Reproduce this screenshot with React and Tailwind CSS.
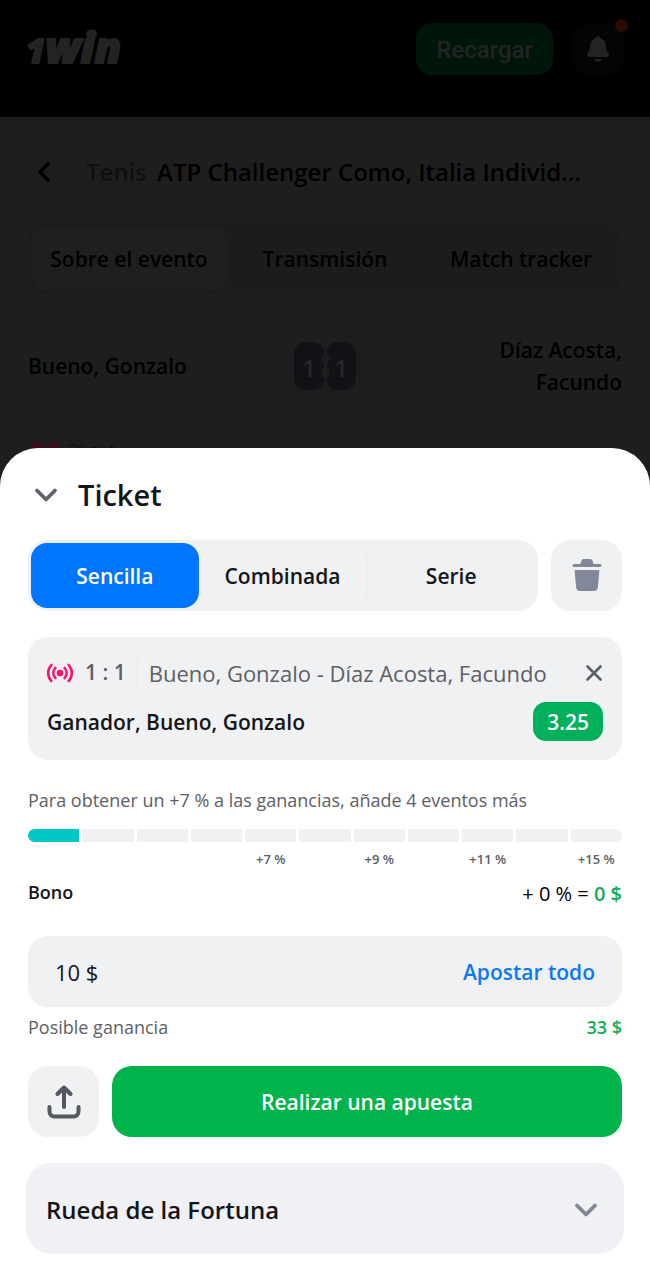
import { ChevronDown, ChevronLeft, X } from "lucide-react";

const EVENT_TABS = ["Sobre el evento", "Transmisión", "Match tracker"];
const SET_COLUMNS = ["1", "2", "3", "P", "S"];
const BONUS_STEPS = ["", "", "", "", "+7 %", "", "+9 %", "", "+11 %", "", "+15 %"];

const Logo = () => (
  <svg viewBox="0 0 98 52" className="h-[52px] w-[98px] overflow-visible" role="img" aria-label="1win">
    <text
      x="0"
      y="40"
      fill="#232323"
      stroke="#232323"
      strokeWidth="2"
      strokeLinejoin="round"
      fontFamily="Open Sans, sans-serif"
      fontSize="43"
      fontWeight="800"
      fontStyle="italic"
    >
      <tspan fontSize="33">1</tspan>win
    </text>
  </svg>
);

const BellIcon = () => (
  <svg viewBox="0 0 24 28" className="h-7 w-6" fill="#232323" aria-hidden="true">
    <path d="M12 1c1.300 0 2 .9 2.200 2.100C17.800 4.200 19.800 7.200 19.900 11c.1 3.600.7 5 2.400 6.800 1.600 1.900.6 4.200-1.800 4.200h-17c-2.400 0-3.400-2.300-1.800-4.200C3.400 16 4 14.600 4.100 11c.1-3.800 2.100-6.800 5.700-7.900C10 1.900 10.700 1 12 1z" />
    <path d="M8 24h8c-.5 1.800-2 2.800-4 2.800S8.500 25.800 8 24z" />
  </svg>
);

const LiveIcon = ({ color }) => (
  <svg
    viewBox="0 0 28 20"
    className="h-5 w-7 shrink-0"
    fill="none"
    stroke={color}
    strokeWidth="2.600"
    strokeLinecap="round"
    aria-hidden="true"
  >
    <circle cx="13" cy="10" r="3.300" fill={color} stroke="none" />
    <path d="M8.300 5c-2.600 3-2.600 7 0 10M4.300 2c-4.200 4.800-4.200 11.200 0 16M17.700 5c2.600 3 2.600 7 0 10M21.700 2c4.200 4.800 4.200 11.200 0 16" />
  </svg>
);

const TrashIcon = () => (
  <svg viewBox="0 0 30 34" className="h-[34px] w-[30px]" fill="#82879a" aria-hidden="true">
    <path d="M8.500 5 9.500 1.500Q10 0 11.500 0h7Q20 0 20.500 1.500L21.500 5H28a1.500 1.500 0 0 1 0 3H2a1.500 1.500 0 0 1 0-3z" />
    <path d="M2.600 11h24.800l-1.500 17.300Q25.600 32 22 32H8q-3.600 0-3.900-3.700z" />
  </svg>
);

const ShareIcon = () => (
  <svg
    viewBox="0 0 34 34"
    className="size-[34px]"
    fill="none"
    stroke="#555861"
    strokeWidth="4"
    strokeLinecap="round"
    strokeLinejoin="round"
    aria-hidden="true"
  >
    <path d="M17 22V3M10.500 9 17 2.500 23.500 9M2.500 22v4.500a5 5 0 0 0 5 5h19a5 5 0 0 0 5-5V22" />
  </svg>
);

const Score = () => (
  <svg viewBox="0 0 64 50" className="h-[50px] w-16 shrink-0" role="img" aria-label="1 : 1">
    <path
      fill="#121216"
      d="M14 1h5c7 0 11 4 12 10 1 3-3 4-3 7s3 4 3 7-3 4-3 7 4 4 3 7c-1 6-5 10-12 10h-5C6 49 1 44 1 36V14C1 6 6 1 14 1z"
    />
    <path
      fill="#121216"
      d="M50 1h-5c-7 0-10 4-11 9-1 3 3 4 3 7s-3 5-3 8 3 4 3 7-4 4-3 7c1 6 4 10 11 10h5c8 0 13-5 13-13V14C63 6 58 1 50 1z"
    />
    <g fill="#27272b" fontFamily="Open Sans, sans-serif" fontSize="24" fontWeight="600" textAnchor="middle">
      <text x="16" y="36">
        1
      </text>
      <text x="48" y="36">
        1
      </text>
    </g>
  </svg>
);

const TopBar = () => (
  <header className="flex h-[117px] items-start justify-between bg-black px-[26px] pt-[23px]">
    <a href="#home">
      <Logo />
    </a>
    <div className="flex gap-[19px]">
      <button
        type="button"
        className="h-[52px] rounded-2xl bg-[#00160a] px-5 pt-0.5 font-[Roboto,sans-serif] text-2xl font-medium text-[#232323]"
      >
        Recargar
      </button>
      <button
        type="button"
        aria-label="Notificaciones"
        className="relative flex size-[52px] items-center justify-center rounded-2xl bg-[#040404]"
      >
        <BellIcon />
        <span className="absolute -top-1 -right-1 size-[13px] rounded-full bg-[#2b0b00]" />
      </button>
    </div>
  </header>
);

const EventPage = () => (
  <main className="px-7 text-black">
    <div className="flex items-center pt-9">
      <button type="button" aria-label="Atrás" className="flex w-[58px] shrink-0 justify-start">
        <ChevronLeft className="size-8" strokeWidth={2.5} />
      </button>
      <h1 className="truncate text-2xl leading-[38px] font-semibold">
        <span className="mr-2.5 text-[#0f0f0f]">Tenis</span>
        ATP Challenger Como, Italia Individ...
      </h1>
    </div>

    <nav className="mt-8 flex rounded-[20px] bg-[#1c1c1c] p-[3px]">
      {EVENT_TABS.map((tab, index) => (
        <button
          key={tab}
          type="button"
          className={`h-[65px] flex-1 rounded-2xl pt-0.5 text-[21px] font-semibold whitespace-nowrap ${
            index === 0 ? "bg-[#1f1f1f]" : ""
          }`}
        >
          {tab}
        </button>
      ))}
    </nav>

    <section className="relative mt-10 text-[21px] leading-8 font-semibold">
      <div className="absolute top-1 left-1/2 -ml-[35px] size-[146px] rounded-full bg-[#1d1d1d]" />
      <div className="relative flex items-center justify-between">
        <p className="flex-1">Bueno, Gonzalo</p>
        <Score />
        <div className="flex flex-1 justify-end">
          <p className="w-36 text-right">Díaz Acosta, Facundo</p>
        </div>
      </div>
      <div className="relative mt-9 flex items-start justify-between">
        <div className="flex items-center gap-2 pl-1 text-lg leading-8 font-normal text-[#0f0f0f]">
          <LiveIcon color="#5a001f" />
          2º set
        </div>
        <div className="flex gap-4 text-lg leading-10">
          {SET_COLUMNS.map((column) => (
            <span key={column}>{column}</span>
          ))}
        </div>
      </div>
    </section>
  </main>
);

const BetTypes = () => (
  <div className="mt-[21px] flex gap-[13px]">
    <div className="flex flex-1 rounded-[20px] bg-[#eff1f2] p-[3px] text-[21px] font-semibold">
      <button type="button" className="h-[65px] flex-1 rounded-2xl bg-[#0075ff] pt-0.5 text-white">
        Sencilla
      </button>
      <button type="button" className="h-[65px] flex-1 pt-0.5">
        Combinada
      </button>
      <span className="h-10 w-px self-center bg-[#e4e6e8]" />
      <button type="button" className="h-[65px] flex-1 pt-0.5">
        Serie
      </button>
    </div>
    <button
      type="button"
      aria-label="Eliminar"
      className="flex size-[71px] items-center justify-center rounded-[20px] bg-[#eff1f2]"
    >
      <TrashIcon />
    </button>
  </div>
);

const BetCard = () => (
  <article className="mt-[26px] rounded-[20px] bg-[#eff1f2] px-[19px] pt-[18px] pb-[19px]">
    <div className="flex h-9 items-center text-[#5d6067]">
      <LiveIcon color="#ff0f6e" />
      <span className="ml-2.5 text-[21px] font-semibold whitespace-nowrap">1 : 1</span>
      <span className="mx-[11px] h-8 w-px bg-[#e4e6e8]" />
      <span className="flex-1 truncate text-[22px]">Bueno, Gonzalo - Díaz Acosta, Facundo</span>
      <button type="button" aria-label="Quitar" className="-mr-1 ml-2">
        <X className="size-[26px]" strokeWidth={2.5} />
      </button>
    </div>
    <div className="mt-[11px] flex items-center justify-between text-[21px] font-semibold">
      <h3 className="pt-0.5">Ganador, Bueno, Gonzalo</h3>
      <span className="rounded-[13px] bg-[#00b05a] px-3.5 pt-0.5 leading-[37px] text-white">3.25</span>
    </div>
  </article>
);

const Bonus = () => (
  <section>
    <p className="mt-6 text-lg leading-8 text-[#5d6067]">
      Para obtener un +7 % a las ganancias, añade 4 eventos más
    </p>
    <div className="mt-[13px] flex gap-[3px]">
      {BONUS_STEPS.map((label, index) => (
        <div key={index} className="group flex-1">
          <div
            className={`h-[13px] group-first:rounded-l-full group-last:rounded-r-full ${
              index === 0 ? "bg-[#00c8c5]" : "bg-[#eff1f2]"
            }`}
          />
          <p className="mt-1 h-[26px] text-center text-[13px] leading-[26px] font-semibold whitespace-nowrap text-[#5d6067]">
            {label}
          </p>
        </div>
      ))}
    </div>
    <div className="flex items-end justify-between font-semibold">
      <h3 className="text-lg leading-10">Bono</h3>
      <p className="text-xl leading-9 font-normal text-black">
        + 0 % = <span className="font-semibold text-[#10ad54]">0 $</span>
      </p>
    </div>
  </section>
);

const Stake = () => (
  <section>
    <div className="mt-6 flex h-[71px] items-center rounded-[20px] bg-[#eff1f2] px-[27px] pt-0.5">
      <input
        type="text"
        aria-label="Importe"
        defaultValue="10 $"
        className="min-w-0 flex-1 bg-transparent text-[22px] outline-none"
      />
      <button type="button" className="text-[21px] font-semibold text-[#0d78f2]">
        Apostar todo
      </button>
    </div>
    <div className="mt-1 flex justify-between text-lg leading-8">
      <span className="text-[#5d6067]">Posible ganancia</span>
      <span className="font-semibold text-[#10ad54]">33 $</span>
    </div>
    <div className="mt-[23px] flex gap-[13px]">
      <button
        type="button"
        aria-label="Compartir"
        className="flex size-[71px] items-center justify-center rounded-[20px] bg-[#eff1f2]"
      >
        <ShareIcon />
      </button>
      <button
        type="button"
        className="flex-1 rounded-[20px] bg-[#00b34b] pt-0.5 text-[21px] font-semibold text-white"
      >
        Realizar una apuesta
      </button>
    </div>
  </section>
);

const Ticket = () => (
  <aside className="fixed inset-x-0 bottom-0 rounded-t-[38px] bg-white px-7 pt-[23px] pb-[26px] text-[#14151a]">
    <div className="flex h-12 items-center gap-3.5">
      <button type="button" aria-label="Cerrar">
        <ChevronDown className="size-9" color="#5f626b" strokeWidth={2.5} />
      </button>
      <h2 className="text-[29px] font-semibold">Ticket</h2>
    </div>
    <BetTypes />
    <BetCard />
    <Bonus />
    <Stake />
    <button
      type="button"
      className="-mx-0.5 mt-[26px] flex h-[91px] w-[calc(100%+4px)] items-center justify-between rounded-[26px] bg-[#eff1f5] px-5 pt-0.5 text-2xl font-semibold"
    >
      Rueda de la Fortuna
      <ChevronDown className="size-9" color="#82879a" strokeWidth={2.5} />
    </button>
  </aside>
);

const App = () => {
  return (
    <div className="min-h-screen bg-[#1e1e1e] font-['Open_Sans',sans-serif]">
      <TopBar />
      <EventPage />
      <Ticket />
    </div>
  );
};

export default App;
